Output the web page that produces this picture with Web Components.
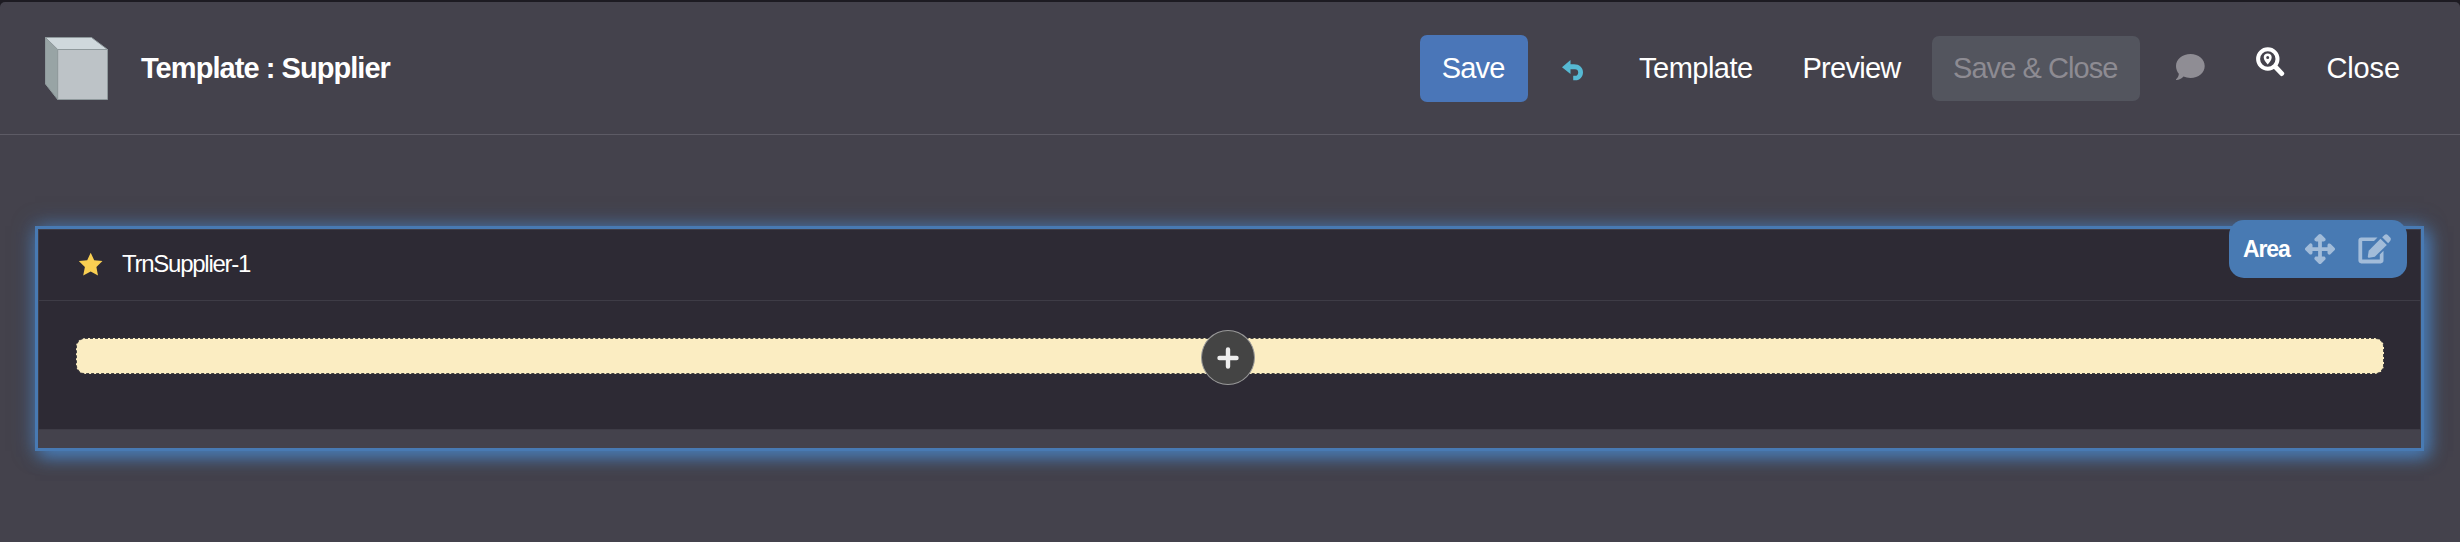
<!DOCTYPE html>
<html lang="en"><head><meta charset="utf-8"><title>Template : Supplier</title>
<style>
html,body{margin:0;height:100%;background:#1d1b22}
body{display:flex;flex-direction:column;box-sizing:border-box;padding-top:2px;font-family:"Liberation Sans",Arial,sans-serif;color:#fff;overflow:hidden}
</style></head><body>
<template-editor></template-editor>
<script>
const define=(name,html)=>customElements.define(name,class extends HTMLElement{
  constructor(){super();this.attachShadow({mode:'open'}).innerHTML=html;}
});

define('cube-logo',`<style>:host{display:block;width:64px;height:64px}svg{display:block}</style>
<svg width="64" height="64" viewBox="0 0 64 64"><g stroke="#8f999c" stroke-width="1" stroke-linejoin="round">
<path d="M.5.5V47L12.700 62.500V12.500Z" fill="#98a4a5"/><path d="M.5.5H46.500L62.500 12.500H12.700Z" fill="#cfd8dc"/><path d="M12.700 12.500H62.500V62.500H12.700Z" fill="#bdc3c7"/></g></svg>`);

define('icon-undo',`<style>:host,svg{display:block}</style><svg width="21" height="21" viewBox="0 0 21 21"><path fill="#56b9d3" d="M0 7.200 8.500 0V4.200H12C17.300 4.200 21 7.500 21 12.200 21 16.700 17.800 20.300 13.500 20.300H11.200V15.800H13C15 15.800 16.200 14.400 16.200 12.400 16.200 10.400 15 9.300 13 9.300H8.500V14Z"/></svg>`);
define('icon-comment',`<style>:host,svg{display:block}</style><svg width="29" height="27" viewBox="0 0 29 27"><path fill="#8f8d94" d="M14.500 0C22.600 0 28.700 5.300 28.700 12S22.600 24 14.500 24C11.900 24 9.600 23.500 7.500 22.600 5.600 24.700 3 26 .3 26 -.2 25.900 0 25.400 .3 25 1.800 23.500 2.900 21.500 2.800 19.700 1.200 17.800 0 15.200 0 12 0 5.300 6.400 0 14.500 0Z"/></svg>`);
define('icon-locate',`<style>:host,svg{display:block}</style><svg width="29" height="31" viewBox="0 0 29 31"><circle cx="11.800" cy="12" r="9.700" fill="none" stroke="#fff" stroke-width="4"/><path d="M20 20.500 25.800 26.600" stroke="#fff" stroke-width="4.800" stroke-linecap="round"/><path fill="#fff" fill-rule="evenodd" d="M11.700 6.500C14 6.500 15.700 8.200 15.700 10.300 15.700 12.800 13.700 15.500 11.700 17.500 9.700 15.500 7.700 12.800 7.700 10.300 7.700 8.200 9.400 6.500 11.700 6.500ZM11.700 8.900A1.500 1.500 0 1 0 11.700 11.900 1.500 1.500 0 0 0 11.700 8.900Z"/></svg>`);
define('icon-star',`<style>:host,svg{display:block}</style><svg width="24" height="24" viewBox="0 0 24 24"><path fill="#f9cf52" d="M11.700 .7 15.200 8.200 23.500 9.100 17.400 14.900 19 23.600 11.700 19.600 4.200 23.600 5.900 14.900 -.2 9.100 8.200 8.200Z"/></svg>`);
define('icon-move',`<style>:host,svg{display:block}</style><svg width="30" height="30" viewBox="0 0 512 512"><path fill="#a2bcd9" d="M278.600 9.400c-12.500-12.500-32.800-12.500-45.300 0l-64 64c-9.200 9.200-11.900 22.900-6.900 34.900s16.600 19.800 29.600 19.800h32v96H128V192c0-12.900-7.800-24.600-19.800-29.600s-25.700-2.200-34.900 6.900l-64 64c-12.500 12.500-12.500 32.800 0 45.300l64 64c9.200 9.200 22.900 11.900 34.900 6.900s19.800-16.600 19.800-29.600V288h96v96H192c-12.900 0-24.600 7.800-29.600 19.800s-2.200 25.700 6.900 34.900l64 64c12.500 12.500 32.800 12.500 45.300 0l64-64c9.200-9.200 11.900-22.900 6.900-34.900s-16.600-19.800-29.600-19.800H288V288h96v32c0 12.900 7.800 24.600 19.800 29.600s25.700 2.200 34.900-6.900l64-64c12.500-12.500 12.500-32.800 0-45.300l-64-64c-9.200-9.200-22.900-11.900-34.900-6.900s-19.800 16.600-19.800 29.600v32H288V128h32c12.900 0 24.600-7.800 29.600-19.800s2.200-25.700-6.900-34.900l-64-64z"/></svg>`);
define('icon-edit',`<style>:host,svg{display:block}</style><svg width="33" height="30" viewBox="0 0 33 30"><g fill="#a2bcd9"><path d="M19.500 3.500 16 7H4.200V25.600H21.800V20.500L25.500 16.800V26.600C25.500 28.300 24.300 29.400 22.700 29.400H3.200C1.500 29.400.4 28.200.4 26.600V6.300C.4 4.600 1.600 3.500 3.200 3.500Z"/><path d="M22.500 4.800 28.800 11.100 16.800 22.700 11.200 23.700Q9.700 23.900 9.800 22.500L10.700 16.700Z"/><path d="M24.200 3.200 26.500.9Q28.200-.5 29.800 1L32.200 3.400Q33.500 5 32.300 6.700L30.200 9.200Z"/></g></svg>`);
define('icon-plus',`<style>:host,svg{display:block}</style><svg width="22" height="22" viewBox="0 0 22 22"><path d="M11 2.500V19.500M2.500 11H19.500" fill="none" stroke="#eee" stroke-width="4.400" stroke-linecap="round"/></svg>`);

define('tool-button',`<style>
:host{display:flex;align-items:center;box-sizing:border-box;height:67px;padding-bottom:1px;border-radius:7px;font-size:29px;line-height:34px;white-space:nowrap}
:host([kind=primary]){background:#4a76b8}
:host([kind=disabled]){background:#53555e;color:#8d8b92;height:65px}
</style><slot></slot>`);

define('editor-header',`<style>
:host{display:flex;align-items:center;box-sizing:border-box;height:133px;border-bottom:1px solid #5d5b65;padding:1px 0 0 45px}
cube-logo{margin-top:1px}
h1{margin:-1px 0 0 32px;font-size:29px;line-height:34px;letter-spacing:-.95px;white-space:nowrap;flex:1}
nav{display:flex;align-items:center;width:1040px}
nav>*{flex:none;box-sizing:border-box}
.save{width:108px;padding-left:21.700px;letter-spacing:-.79px}
.tpl{width:114px;margin-left:56.500px;letter-spacing:-.5px}
.prev{width:98px;margin-left:49.500px;letter-spacing:-.73px}
.sc{width:208px;margin-left:31.500px;padding-left:21px;letter-spacing:-.93px}
.close{margin-left:41.400px;letter-spacing:-.1px}
icon-undo{margin:4px 0 0 33.500px}icon-comment{margin:-2px 0 0 36px}icon-locate{margin:-12px 0 0 51px}
</style><cube-logo></cube-logo><h1>Template : Supplier</h1>
<nav><tool-button class="save" kind="primary">Save</tool-button><icon-undo></icon-undo>
<tool-button class="tpl">Template</tool-button><tool-button class="prev">Preview</tool-button>
<tool-button class="sc" kind="disabled">Save &amp; Close</tool-button><icon-comment></icon-comment><icon-locate></icon-locate>
<tool-button class="close">Close</tool-button></nav>`);

define('area-badge',`<style>
:host{display:flex;align-items:center;box-sizing:border-box;width:178px;height:58px;border-radius:15px;background:#487ab3;padding-left:14px}
b{font-size:23px;line-height:26px;letter-spacing:-1.100px;width:62px}icon-edit{margin-left:23px}
</style><b>Area</b><icon-move></icon-move><icon-edit></icon-edit>`);

define('drop-bar',`<style>
:host{display:flex;align-items:center;justify-content:center;box-sizing:border-box;height:36px;border-radius:9px;background:#fbedc2;border:1px dashed #444}
.add{flex:none;display:grid;place-items:center;box-sizing:border-box;width:54px;height:55px;border-radius:50%;background:#444;border:1px solid #999;margin:3px 4px 0 0}
</style><div class="add"><icon-plus></icon-plus></div>`);

define('area-card',`<style>
:host{display:block;box-sizing:border-box;height:201px;background:#2d2a34;border:1px solid #3e3c46}
header{display:flex;align-items:center;box-sizing:border-box;height:71px;border-bottom:1px solid #3e3c46;padding:0 0 3px 40px;font-size:24px;line-height:27px;letter-spacing:-1.260px}
icon-star{margin-top:1px}
header span{margin-left:19px}
drop-bar{margin:37px 36px 0 37px}
</style><header><icon-star></icon-star><span><slot></slot></span></header><drop-bar></drop-bar>`);

define('area-frame',`<style>
:host{display:block;position:relative;box-sizing:border-box;height:225px;border:3px solid #487ab3;box-shadow:0 0 20px rgba(72,122,179,.7),5px 6px 16px #487ab3}
area-badge{position:absolute;top:-9px;right:14px}
</style><slot></slot><area-badge></area-badge>`);

define('template-editor',`<style>
:host{display:block;box-sizing:border-box;flex:1;background:#44424c;border-radius:5px 5px 0 0}
main{padding:91px 36px 0 35px}
</style><editor-header></editor-header><main><area-frame><area-card>TrnSupplier-1</area-card></area-frame></main>`);
</script></body></html>
